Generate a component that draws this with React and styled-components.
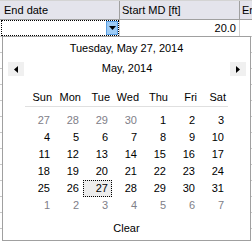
import React from 'react';
import styled, { createGlobalStyle } from 'styled-components';

const Global = createGlobalStyle`
  html, body { margin: 0; padding: 0; background: #fff; }
  body { font-family: "Liberation Sans", Arial, sans-serif; font-size: 11px; color: #000; }
`;

const Grid = styled.div`
  position: relative;
  width: 252px;
  height: 242px;
  overflow: hidden;
  background: #fff;
`;

const HeaderRow = styled.div`
  display: flex;
  height: 18px;
  border-top: 1px solid #d4d4d4;
  border-bottom: 1px solid #a0a0a0;
  background: #e4e4ec;
`;

const HeaderCell = styled.div`
  flex: 0 0 ${(p) => p.$w}px;
  box-sizing: border-box;
  border-right: 1px solid #a0a0a0;
  padding-left: ${(p) => p.$pl}px;
  line-height: 18px;
  white-space: nowrap;
  overflow: hidden;
`;

const DataRow = styled.div`
  display: flex;
  height: 16px;
  border-bottom: 1px solid #c8c8c8;
`;

const DataCell = styled.div`
  flex: 0 0 ${(p) => p.$w}px;
  box-sizing: border-box;
  border-right: 1px solid #d0d0d0;
  display: flex;
  justify-content: flex-end;
  align-items: center;
  padding: ${(p) => (p.$focus ? '0 0 0 1px' : '0 3px 0 0')};
  line-height: 16px;
`;

const FocusBox = styled.div`
  flex: 1;
  height: 16px;
  box-sizing: border-box;
  border: 1px dotted #000;
  display: flex;
  justify-content: flex-end;
`;

const DropButton = styled.div`
  width: 12px;
  height: 14px;
  box-sizing: border-box;
  background: #9ccbf6;
  border: 1px solid #5a9fe4;
  display: flex;
  align-items: center;
  justify-content: center;
`;

const EmptyRow = styled.div`
  height: 15px;
  border-bottom: 1px solid #c8c8c8;
`;

const Popup = styled.div`
  position: absolute;
  left: 2px;
  top: 36px;
  width: 249px;
  height: 205px;
  box-sizing: border-box;
  border: 1px solid #a0a0a0;
  background: #fff;
  display: flex;
  flex-direction: column;
  align-items: center;
`;

const Title = styled.div`
  margin-top: 4px;
  height: 14px;
  line-height: 14px;
  text-align: center;
  align-self: stretch;
`;

const NavRow = styled.div`
  margin-top: 7px;
  align-self: stretch;
  height: 14px;
  display: flex;
  align-items: center;
  padding: 0 4px 0 5px;
`;

const NavButton = styled.div`
  width: 16px;
  height: 14px;
  background: #f0f0f0;
  display: flex;
  align-items: center;
  justify-content: center;
`;

const MonthLabel = styled.div`
  flex: 1;
  text-align: center;
  line-height: 14px;
  margin-top: -2px;
`;

const Calendar = styled.div`
  margin-top: 13px;
  width: 203px;
  display: grid;
  grid-template-columns: repeat(7, 29px);
`;

const DayHead = styled.div`
  height: 17px;
  line-height: 17px;
  text-align: right;
  padding-right: 2px;
  border-bottom: 1px solid #e0e0e0;
  margin-bottom: 5px;
`;

const DayCell = styled.div`
  height: 17px;
  line-height: ${(p) => (p.$sel ? '15px' : '17px')};
  box-sizing: border-box;
  text-align: right;
  padding-right: ${(p) => (p.$sel ? '3px' : '4px')};
  color: ${(p) => (p.$other ? '#808088' : '#000')};
  background: ${(p) => (p.$sel ? '#ececec' : 'transparent')};
  border: ${(p) => (p.$sel ? '1px dotted #000' : 'none')};
`;

const Clear = styled.div`
  margin-top: 7px;
  line-height: 14px;
`;

const days = ['Sun', 'Mon', 'Tue', 'Wed', 'Thu', 'Fri', 'Sat'];

function buildDates() {
  const out = [];
  [27, 28, 29, 30].forEach((d) => out.push({ d, other: true }));
  for (let d = 1; d <= 31; d++) out.push({ d, other: false, sel: d === 27 });
  for (let d = 1; d <= 7; d++) out.push({ d, other: true });
  return out;
}

const Arrow = ({ dir }) => (
  <svg width="4" height="7" viewBox="0 0 4 7">
    {dir === 'left' ? <polygon points="4,0 4,7 0,3.5" fill="#000" /> : <polygon points="0,0 0,7 4,3.5" fill="#000" />}
  </svg>
);

export default function App() {
  const dates = buildDates();
  return (
    <>
      <Global />
      <Grid>
        <HeaderRow>
          <HeaderCell $w={120} $pl={4}>End date</HeaderCell>
          <HeaderCell $w={120} $pl={2}>Start MD [ft]</HeaderCell>
          <HeaderCell $w={20} $pl={2}>End MD [ft]</HeaderCell>
        </HeaderRow>
        <DataRow>
          <DataCell $w={120} $focus>
            <FocusBox>
              <DropButton>
                <svg width="7" height="4" viewBox="0 0 7 4">
                  <polygon points="0,0 7,0 3.5,4" fill="#000" />
                </svg>
              </DropButton>
            </FocusBox>
          </DataCell>
          <DataCell $w={120}>20.0</DataCell>
          <DataCell $w={20} />
        </DataRow>
        {Array.from({ length: 14 }).map((_, i) => (
          <EmptyRow key={i} />
        ))}
        <Popup>
          <Title>Tuesday, May 27, 2014</Title>
          <NavRow>
            <NavButton>
              <Arrow dir="left" />
            </NavButton>
            <MonthLabel>May, 2014</MonthLabel>
            <NavButton>
              <Arrow dir="right" />
            </NavButton>
          </NavRow>
          <Calendar>
            {days.map((d) => (
              <DayHead key={d}>{d}</DayHead>
            ))}
            {dates.map((x, i) => (
              <DayCell key={i} $other={x.other} $sel={x.sel}>
                {x.d}
              </DayCell>
            ))}
          </Calendar>
          <Clear>Clear</Clear>
        </Popup>
      </Grid>
    </>
  );
}
